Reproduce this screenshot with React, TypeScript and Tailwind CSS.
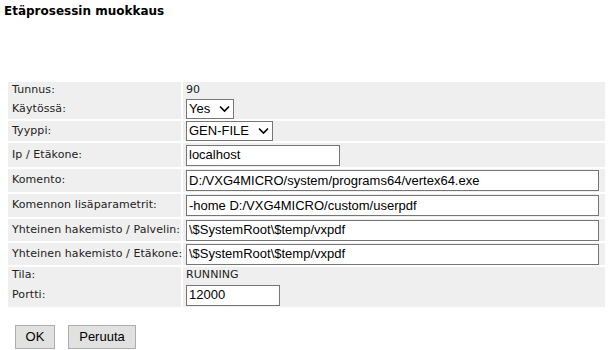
import { ReactNode } from "react";

const label = "font-['DejaVu_Sans',Tahoma,sans-serif] text-[11px] tracking-[0.08px] text-[#222] whitespace-nowrap";
const field = "font-['Liberation_Sans',Arial,sans-serif] text-[13px] text-black whitespace-nowrap";

function Row({ name, h, children }: { name: string; h: string; children: ReactNode }) {
    return (
        <div className={`grid grid-cols-[173px_1fr] gap-[2px] ${h}`}>
            <div className={`bg-[#efefef] flex items-center pl-[4px] ${label}`}>{name}</div>
            <div className="bg-[#efefef] flex items-center pl-[3px]">{children}</div>
        </div>
    );
}

function TextBox({ value, w }: { value: string; w: string }) {
    return (
        <div className={`${w} h-[21px] border border-[#767676] bg-white flex items-center pl-[2px] ${field}`}>
            {value}
        </div>
    );
}

function Select({ value, w }: { value: string; w: string }) {
    return (
        <div className={`${w} h-[20px] border border-[#767676] bg-white flex items-center justify-between pl-[2px] pr-[3px] ${field}`}>
            <span>{value}</span>
            <svg width="11" height="8" viewBox="0 0 11 8">
                <path d="M1 1.5 L5.5 6 L10 1.5" fill="none" stroke="#000" strokeWidth="1.6" />
            </svg>
        </div>
    );
}

export default function App() {
    return (
        <div className="w-[612px] h-[350px] bg-white">
            <div className="pt-[2px] pl-[4px] font-['DejaVu_Sans',Tahoma,sans-serif] text-[12px] font-bold text-black">
                Etäprosessin muokkaus
            </div>

            <div className="mt-[62px] ml-[8px] w-[597px] flex flex-col gap-[2px]">
                <Row name="Tunnus:" h="h-[15px]">
                    <span className={label}>90</span>
                </Row>
                <Row name="Käytössä:" h="h-[20px]">
                    <Select value="Yes" w="w-[48px]" />
                </Row>
                <Row name="Tyyppi:" h="h-[20px]">
                    <Select value="GEN-FILE" w="w-[87px]" />
                </Row>
                <Row name="Ip / Etäkone:" h="h-[24px]">
                    <TextBox value="localhost" w="w-[154px]" />
                </Row>
                <Row name="Komento:" h="h-[23px]">
                    <TextBox value="D:/VXG4MICRO/system/programs64/vertex64.exe" w="w-[413px]" />
                </Row>
                <Row name="Komennon lisäparametrit:" h="h-[23px]">
                    <TextBox value="-home D:/VXG4MICRO/custom/userpdf" w="w-[413px]" />
                </Row>
                <Row name="Yhteinen hakemisto / Palvelin:" h="h-[22px]">
                    <TextBox value="\$SystemRoot\$temp/vxpdf" w="w-[413px]" />
                </Row>
                <Row name="Yhteinen hakemisto / Etäkone:" h="h-[22px]">
                    <TextBox value="\$SystemRoot\$temp/vxpdf" w="w-[413px]" />
                </Row>
                <Row name="Tila:" h="h-[14px]">
                    <span className={label}>RUNNING</span>
                </Row>
                <Row name="Portti:" h="h-[24px]">
                    <TextBox value="12000" w="w-[94px]" />
                </Row>
            </div>

            <div className="mt-[18px] ml-[15px] flex gap-[13px]">
                <button className={`w-[40px] h-[24px] bg-[#e1e1e1] border border-[#adadad] ${field}`}>OK</button>
                <button className={`w-[68px] h-[24px] bg-[#e1e1e1] border border-[#adadad] ${field}`}>Peruuta</button>
            </div>
        </div>
    );
}
